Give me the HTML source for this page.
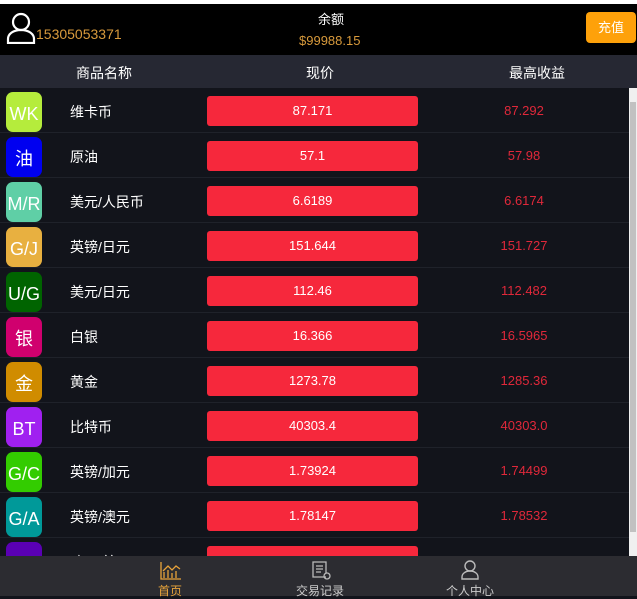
<!DOCTYPE html><html><head><meta charset="utf-8"><style>
*{margin:0;padding:0;box-sizing:border-box}
body{width:637px;height:596px;overflow:hidden;background:#12141b;font-family:"Liberation Sans","Noto Sans CJK SC",sans-serif;position:relative}
.top{position:absolute;top:0;left:0;width:637px;height:4px;background:#fff}
.hdr{position:absolute;top:4px;left:0;width:637px;height:51px;background:#000}
.ch{position:absolute;top:55px;left:0;width:637px;height:33px;background:#262833;color:#fff;font-size:14px}
.ch span{position:absolute;top:8px}
.row{position:absolute;left:0;width:629px;height:45px;border-bottom:1px solid #1f222a}
.ic{position:absolute;left:6px;top:4px;width:36px;height:40px;border-radius:7px;color:#fff;font-size:18px;text-align:center;line-height:44px}
.nm{position:absolute;left:70px;top:14px;color:#fff;font-size:14px}
.pr{position:absolute;left:207px;top:8px;width:211px;height:30px;background:#f6283c;border-radius:3px;color:#fff;font-size:13px;text-align:center;line-height:30px}
.mx{position:absolute;left:460px;width:128px;text-align:center;top:15px;color:#e0283a;font-size:13px}
.sb{position:absolute;left:629px;top:88px;width:8px;height:468px;background:#f0f0f0}
.sb div{position:absolute;left:1px;top:14px;width:6px;height:430px;background:#c1c1c1}
.ft{position:absolute;top:556px;left:0;width:637px;height:40px;background:#2c2c31;font-size:12px}
.ft span{position:absolute;top:26px}
</style></head><body>
<div class="top"></div>
<div class="hdr">
<svg style="position:absolute;left:6px;top:8px" width="30" height="32" viewBox="0 0 30 32" fill="none" stroke="#fff" stroke-width="2.2"><circle cx="15" cy="10" r="8"/><path d="M2 31v-4c0-5 5-9 13-9s13 4 13 9v4z"/></svg>
<div style="position:absolute;left:36px;top:22px;color:#d89a3c;font-size:14px">15305053371</div>
<div style="position:absolute;left:318px;top:5px;color:#fff;font-size:13px">余额</div>
<div style="position:absolute;left:299px;top:29px;color:#d89a3c;font-size:13px">$99988.15</div>
<div style="position:absolute;left:586px;top:8px;width:50px;height:31px;background:#fea10a;border-radius:4px;color:#fff;font-size:13px;text-align:center;line-height:31px">充值</div>
</div>
<div class="ch"><span style="left:76px">商品名称</span><span style="left:306px">现价</span><span style="left:509px">最高收益</span></div>
<div class="row" style="top:88px"><div class="ic" style="background:#b5ec3c">WK</div><div class="nm">维卡币</div><div class="pr">87.171</div><div class="mx">87.292</div></div>
<div class="row" style="top:133px"><div class="ic" style="background:#0000f0">油</div><div class="nm">原油</div><div class="pr">57.1</div><div class="mx">57.98</div></div>
<div class="row" style="top:178px"><div class="ic" style="background:#5fcfa6">M/R</div><div class="nm">美元/人民币</div><div class="pr">6.6189</div><div class="mx">6.6174</div></div>
<div class="row" style="top:223px"><div class="ic" style="background:#e8b040">G/J</div><div class="nm">英镑/日元</div><div class="pr">151.644</div><div class="mx">151.727</div></div>
<div class="row" style="top:268px"><div class="ic" style="background:#006400">U/G</div><div class="nm">美元/日元</div><div class="pr">112.46</div><div class="mx">112.482</div></div>
<div class="row" style="top:313px"><div class="ic" style="background:#d0006e">银</div><div class="nm">白银</div><div class="pr">16.366</div><div class="mx">16.5965</div></div>
<div class="row" style="top:358px"><div class="ic" style="background:#d08c00">金</div><div class="nm">黄金</div><div class="pr">1273.78</div><div class="mx">1285.36</div></div>
<div class="row" style="top:403px"><div class="ic" style="background:#a020f0">BT</div><div class="nm">比特币</div><div class="pr">40303.4</div><div class="mx">40303.0</div></div>
<div class="row" style="top:448px"><div class="ic" style="background:#33cc00">G/C</div><div class="nm">英镑/加元</div><div class="pr">1.73924</div><div class="mx">1.74499</div></div>
<div class="row" style="top:493px"><div class="ic" style="background:#009999">G/A</div><div class="nm">英镑/澳元</div><div class="pr">1.78147</div><div class="mx">1.78532</div></div>
<div class="row" style="top:538px"><div class="ic" style="background:#5a00b4"></div><div class="nm">欧元/美元</div><div class="pr"></div></div>
<div class="sb"><div></div></div>
<div class="ft">
<svg style="position:absolute;left:160px;top:6px" width="22" height="18" viewBox="0 0 22 18" fill="none" stroke="#e8a33a" stroke-width="1.3"><path d="M1 0v17h20M4 16v-6M8 16v-8M12 16v-5M16 16v-7M3 9l5-5 4 4 4-4 4 3"/></svg>
<span style="left:158px;color:#e8a33a">首页</span>
<svg style="position:absolute;left:312px;top:5px" width="20" height="20" viewBox="0 0 20 20" fill="none" stroke="#bbb" stroke-width="1.3"><path d="M14 16H1V1h13v11M4 5h7M4 8h7M4 11h5"/><circle cx="15" cy="15" r="3"/></svg>
<span style="left:296px;color:#ccc">交易记录</span>
<svg style="position:absolute;left:461px;top:4px" width="18" height="20" viewBox="0 0 18 20" fill="none" stroke="#bbb" stroke-width="1.4"><circle cx="9" cy="6" r="5"/><path d="M1 19v-2c0-3 3-6 8-6s8 3 8 6v2z"/></svg>
<span style="left:446px;color:#ccc">个人中心</span>
</div>
</body></html>
